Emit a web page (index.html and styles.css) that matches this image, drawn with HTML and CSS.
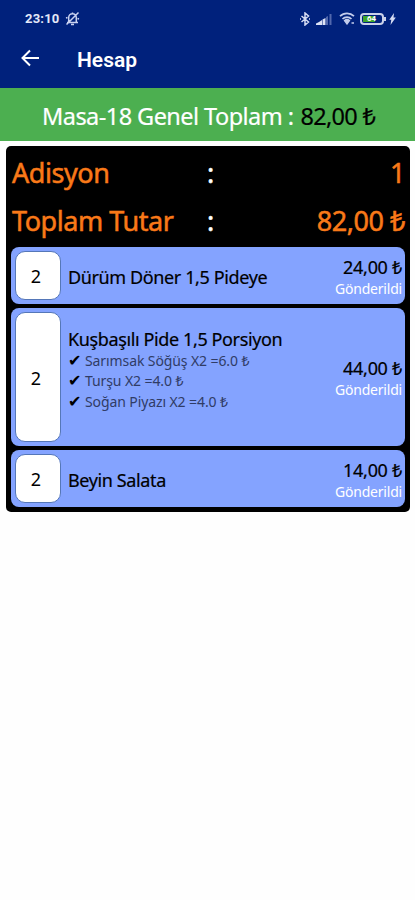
FILE: index.html
```html
<!DOCTYPE html>
<html lang="tr">
<head>
    <meta charset="UTF-8">
    <meta name="viewport" content="width=device-width, initial-scale=1.0">
    <title>Hesap</title>
    <link rel="stylesheet" href="styles.css">
</head>
<body>

    <!-- HEADER -->
    <header class="header">
        <div class="status-bar">
            <span class="clock">23:10</span>
            <svg class="mute" width="15" height="15" viewBox="0 0 15 15" fill="none" stroke="#c9d2f0" stroke-width="1.5">
                <path d="M2 11.500h11M3.700 11V6.500a3.800 3.800 0 0 1 7.600 0V11M7.500 3.200V1.500M6 13.400h3M1.500 13.500l12-12M1 7l1.500-.5M14 8l-1.500-.5"/>
            </svg>
            <div class="status-icons">
                <svg width="12" height="14" viewBox="0 0 12 14" fill="none" stroke="#d5dcf3" stroke-width="1.5">
                    <path d="M2.500 4l7 6L6 13V1l3.500 3-7 6M1 7h1M10 7h1"/>
                </svg>
                <svg class="signal" width="16" height="12" viewBox="0 0 16 12">
                    <path d="M0 12v-1.500L3 9v3zM3 12V9l3-2v5zM6.500 12V6.500l3-1.500v7z" fill="#dce2f5"/>
                    <path d="M10 12V4l2-1v9zM13.500 12V1h2v11z" fill="#5268ad"/>
                </svg>
                <svg class="wifi" width="17" height="13" viewBox="0 0 17 13" fill="none" stroke="#c3cdec" stroke-width="1.7">
                    <path d="M1 4.200a10 10 0 0 1 14 0M3.500 7a6.500 6.500 0 0 1 9 0"/>
                    <path d="M5.500 8.500a4 4 0 0 1 5 0L8 12zM12.500 11h2.500" fill="#c3cdec" stroke-width="1.3"/>
                </svg>
                <div class="battery"><span class="level"></span><span class="percent">64</span></div>
                <svg class="bolt" width="7" height="12" viewBox="0 0 7 12">
                    <path d="M5 0L.3 6.800h2L1.500 12l5.300-7.500H4.500z" fill="#d5dcf3"/>
                </svg>
            </div>
        </div>
        <div class="toolbar">
            <svg width="20" height="18" viewBox="0 0 20 18" fill="none" stroke="#fff" stroke-width="2">
                <path d="M19 9H3M10 1.500L2.500 9l7.500 7.500"/>
            </svg>
            <h1>Hesap</h1>
        </div>
    </header>

    <div class="total-bar"><span class="total-label">Masa-18 Genel Toplam :</span><span class="total-value">82,00 ₺</span></div>

    <!-- BILL -->
    <main class="bill">
        <div class="summary">
            <span>Adisyon</span><span class="colon">:</span><span class="value">1</span>
        </div>
        <div class="summary">
            <span>Toplam Tutar</span><span class="colon">:</span><span class="value">82,00 ₺</span>
        </div>

        <div class="item">
            <div class="qty">2</div>
            <div class="info"><div class="name">Dürüm Döner 1,5 Pideye</div></div>
            <div class="price">24,00 ₺<small>Gönderildi</small></div>
        </div>
        <div class="item tall">
            <div class="qty">2</div>
            <div class="info">
                <div class="name">Kuşbaşılı Pide 1,5 Porsiyon</div>
                <ul>
                    <li><i>✔</i>Sarımsak Söğüş X2 =6.0 ₺</li>
                    <li><i>✔</i>Turşu X2 =4.0 ₺</li>
                    <li><i>✔</i>Soğan Piyazı X2 =4.0 ₺</li>
                </ul>
            </div>
            <div class="price">44,00 ₺<small>Gönderildi</small></div>
        </div>
        <div class="item">
            <div class="qty">2</div>
            <div class="info"><div class="name">Beyin Salata</div></div>
            <div class="price">14,00 ₺<small>Gönderildi</small></div>
        </div>
    </main>

</body>
</html>
```
FILE: styles.css
```css
* {
    box-sizing: border-box;
}
body {
    margin: 0;
    background: #fefefe;
    font-family: "Noto Sans", "Open Sans", sans-serif;
    color: #000;
}
.header {
    height: 88px;
    background: #00217c;
    color: white;
    font-family: Roboto, sans-serif;
}
.status-bar {
    display: flex;
    align-items: center;
    height: 37px;
    padding: 0 19px 0 25px;
}
.clock {
    font-size: 13px;
    font-weight: 700;
    letter-spacing: 0.2px;
    color: #e4e9f8;
}
.mute {
    margin-left: 5px;
}
.status-icons {
    display: flex;
    align-items: center;
    margin-left: auto;
}
.signal {
    margin-left: 5px;
}
.wifi {
    margin-left: 7px;
}
.battery {
    position: relative;
    width: 24px;
    height: 12px;
    margin-left: 4px;
    padding: 1px;
    border: 2px solid #c9d1e9;
    border-radius: 4px;
}
.battery::after {
    content: "";
    position: absolute;
    top: 2px;
    right: -4px;
    width: 2px;
    height: 4px;
    background: #c9d1e9;
}
.level {
    display: block;
    width: 12px;
    height: 6px;
    background: #3fa52c;
}
.percent {
    position: absolute;
    top: 0;
    left: 5px;
    font-size: 8px;
    font-weight: 700;
    line-height: 8px;
}
.bolt {
    margin-left: 5px;
}
.toolbar {
    display: flex;
    align-items: center;
    height: 45px;
    padding-left: 20px;
}
.toolbar svg {
    margin-top: -3px;
}
h1 {
    margin: 0 0 0 37px;
    font-size: 21px;
    font-weight: 600;
}
.total-bar {
    display: flex;
    gap: 7px;
    height: 53px;
    padding-left: 42px;
    background: #4caf50;
    font-size: 23.5px;
    line-height: 56px;
    letter-spacing: -0.55px;
    white-space: nowrap;
    -webkit-text-stroke: 0.2px;
}
.total-label {
    color: white;
}
.total-value {
    letter-spacing: -0.7px;
}
.bill {
    margin: 5px 5px 0 6px;
    padding: 3px 5px 5px;
    background: black;
    border-radius: 5px;
}
.summary {
    display: grid;
    grid-template-columns: 195px 14px 1fr;
    height: 48px;
    padding-left: 1px;
    font-size: 27px;
    line-height: 48px;
    letter-spacing: -0.45px;
    color: #f97918;
    white-space: nowrap;
    -webkit-text-stroke: 0.5px;
}
.colon {
    color: white;
}
.value {
    text-align: right;
}
.item {
    display: flex;
    align-items: center;
    height: 57.5px;
    margin-top: 3.5px;
    padding: 4px;
    background: #84a3ff;
    border-radius: 8px;
}
.summary + .item {
    margin-top: 1.5px;
}
.tall {
    height: 138.500px;
}
.qty {
    display: flex;
    align-items: center;
    justify-content: center;
    align-self: stretch;
    width: 46px;
    flex: none;
    padding: 2px 4px 0 0;
    background: white;
    border: 1px solid #5577b8;
    border-radius: 10px;
    font-size: 18px;
}
.info {
    flex: 1;
    margin-left: 7px;
    padding-top: 3px;
    white-space: nowrap;
}
.tall .info {
    padding-bottom: 18px;
}
.name {
    font-size: 18px;
    line-height: 24px;
    letter-spacing: -0.38px;
    -webkit-text-stroke: 0.2px;
}
ul {
    margin: 0;
    padding: 0;
    list-style: none;
}
li {
    height: 20.5px;
    font-size: 14px;
    line-height: 20.5px;
    letter-spacing: -0.1px;
    color: #303c66;
}
i {
    display: inline-block;
    width: 17px;
    font-family: "DejaVu Sans", sans-serif;
    font-size: 16px;
    font-style: normal;
    line-height: 16px;
    color: black;
}
.price {
    margin-right: -1px;
    padding-top: 5px;
    font-size: 18px;
    line-height: 22px;
    letter-spacing: -0.3px;
    text-align: right;
    white-space: nowrap;
    -webkit-text-stroke: 0.2px;
}
.price small {
    display: block;
    font-size: 14px;
    letter-spacing: -0.2px;
    color: white;
    -webkit-text-stroke: 0;
}
```
